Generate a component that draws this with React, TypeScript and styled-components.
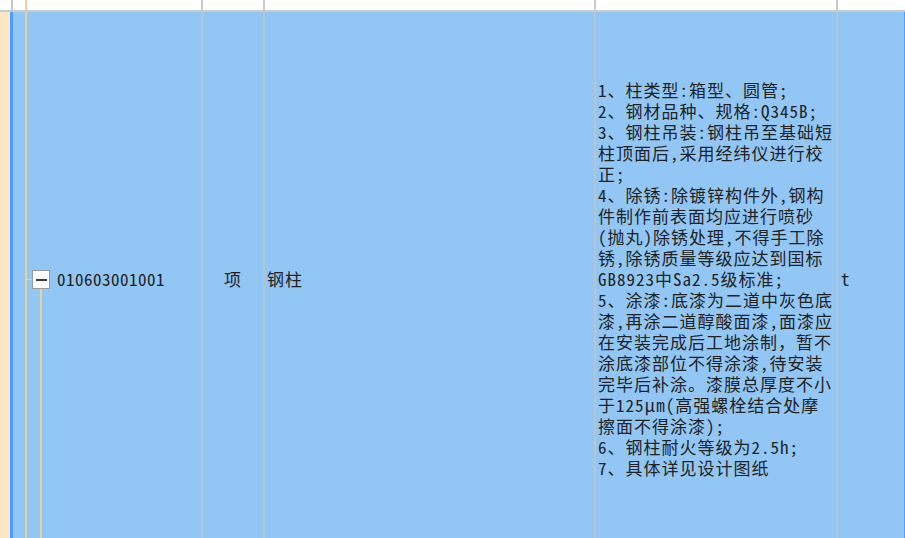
import React from "react";
import styled, { createGlobalStyle } from "styled-components";

const GlobalStyle = createGlobalStyle`
  html, body {
    margin: 0;
    padding: 0;
    background: #ffffff;
    overflow: hidden;
  }
  #root {
    width: 905px;
    height: 538px;
    overflow: hidden;
  }
`;

const BLUE = "#92c7f5";
const PEACH = "#ffe6c5";
const ORANGE = "#eed0a0";
const MARK = "#4d9cff";

const Sheet = styled.div`
  width: 905px;
  height: 538px;
  overflow: hidden;
  display: flex;
  flex-direction: column;
  font-family: "Noto Sans Mono CJK SC", "Noto Sans CJK SC", "DejaVu Sans Mono", monospace;
  font-size: 17px;
  letter-spacing: 1px;
  color: #222;
`;

const Row = styled.div<{ $header?: boolean }>`
  display: grid;
  grid-template-columns: 10px 3px 188px 62px 331px 242px 68px 1px;
  flex: none;
  height: ${(p) => (p.$header ? "10px" : "535px")};
  background: ${(p) => (p.$header ? "#ffffff" : BLUE)};
  border-bottom: ${(p) => (p.$header ? "2px solid #cbcbcb" : "none")};
`;

const Gutter = styled.div<{ $header?: boolean }>`
  background: ${(p) => (p.$header ? "#ffffff" : PEACH)};
`;

const Marker = styled.div<{ $header?: boolean }>`
  background: ${(p) => (p.$header ? "#ffffff" : MARK)};
  box-shadow: ${(p) => (p.$header ? "inset 1px 0 0 #ffffff, inset 3px 0 0 #c8c8c8" : "none")};
`;

const EdgeLine = styled.div<{ $header?: boolean }>`
  background: ${(p) => (p.$header ? "#ffffff" : MARK)};
`;

const Cell = styled.div<{ $header?: boolean; $align?: "left" | "center"; $pad?: number }>`
  border-left: 2px solid ${(p) => (p.$header ? "#c9c9c9" : "#b7c5d3")};
  display: flex;
  align-items: center;
  justify-content: ${(p) => (p.$align === "center" ? "center" : "flex-start")};
  padding-left: ${(p) => p.$pad ?? 0}px;
  padding-bottom: ${(p) => (p.$header ? 0 : 3)}px;
  white-space: nowrap;
  min-width: 0;
  overflow: hidden;
`;

const TreeCell = styled.div`
  display: flex;
  align-items: center;
  padding-left: 12px;
  min-width: 0;
  overflow: hidden;
`;

const Rail = styled.div`
  align-self: stretch;
  width: 7px;
  flex: none;
  box-sizing: border-box;
  border-left: 2px solid ${ORANGE};
  display: flex;
  align-items: center;
`;

const Connector = styled.div`
  height: 1px;
  width: 100%;
  background: ${ORANGE};
`;

const NodeColumn = styled.div`
  align-self: stretch;
  width: 18px;
  flex: none;
  display: flex;
  flex-direction: column;
  align-items: center;
`;

const Spacer = styled.div`
  flex: 1;
`;

const Stem = styled.div`
  flex: 1;
  width: 2px;
  background: ${ORANGE};
`;

const ToggleBox = styled.div`
  box-sizing: border-box;
  width: 18px;
  height: 19px;
  background: #ffffff;
  border: 1px solid #9a9a9a;
  display: flex;
  align-items: center;
  justify-content: center;
  flex: none;
`;

const MinusBar = styled.span`
  display: block;
  width: 11px;
  height: 2px;
  background: #3a3a3a;
`;

const CodeText = styled.span`
  margin-left: 7px;
  margin-bottom: 3px;
  letter-spacing: 0.5px;
`;

const DescText = styled.div`
  line-height: 21px;
  white-space: pre;
`;

const description = [
  "1、柱类型:箱型、圆管;",
  "2、钢材品种、规格:Q345B;",
  "3、钢柱吊装:钢柱吊至基础短",
  "柱顶面后,采用经纬仪进行校",
  "正;",
  "4、除锈:除镀锌构件外,钢构",
  "件制作前表面均应进行喷砂",
  "(抛丸)除锈处理,不得手工除",
  "锈,除锈质量等级应达到国标",
  "GB8923中Sa2.5级标准;",
  "5、涂漆:底漆为二道中灰色底",
  "漆,再涂二道醇酸面漆,面漆应",
  "在安装完成后工地涂制，暂不",
  "涂底漆部位不得涂漆,待安装",
  "完毕后补涂。漆膜总厚度不小",
  "于125μm(高强螺栓结合处摩",
  "擦面不得涂漆);",
  "6、钢柱耐火等级为2.5h;",
  "7、具体详见设计图纸",
].join("\n");

export default function App() {
  return (
    <>
      <GlobalStyle />
      <Sheet>
        <Row $header>
          <Gutter $header />
          <Marker $header />
          <TreeCell>
            <Rail />
          </TreeCell>
          <Cell $header />
          <Cell $header />
          <Cell $header />
          <Cell $header />
          <EdgeLine $header />
        </Row>
        <Row>
          <Gutter />
          <Marker />
          <TreeCell>
            <Rail>
              <Connector />
            </Rail>
            <NodeColumn>
              <Spacer />
              <ToggleBox>
                <MinusBar />
              </ToggleBox>
              <Stem />
            </NodeColumn>
            <CodeText>010603001001</CodeText>
          </TreeCell>
          <Cell $align="center">项</Cell>
          <Cell $pad={2}>钢柱</Cell>
          <Cell $pad={2}>
            <DescText>{description}</DescText>
          </Cell>
          <Cell $pad={3}>t</Cell>
          <EdgeLine />
        </Row>
      </Sheet>
    </>
  );
}
